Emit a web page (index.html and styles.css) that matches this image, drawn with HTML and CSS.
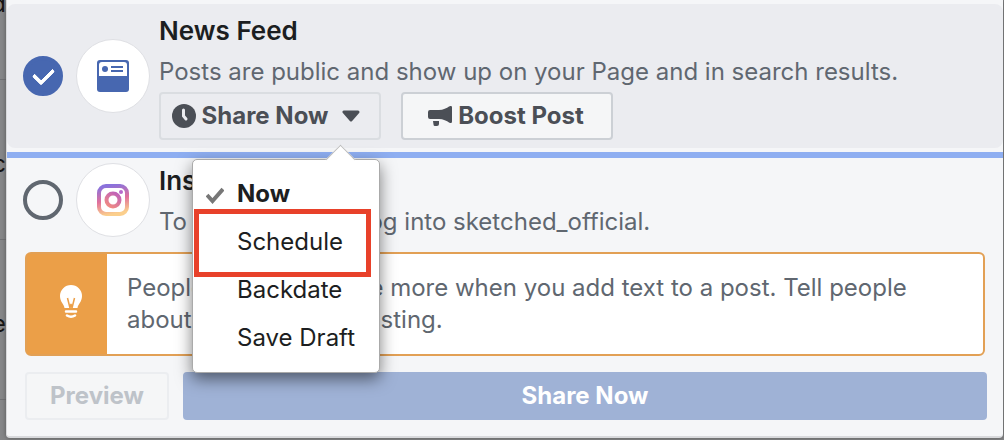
FILE: index.html
```html
<!DOCTYPE html>
<html lang="en">

<head>
    <meta charset="utf-8">
    <title>Share post</title>
    <link rel="stylesheet" href="styles.css">
</head>

<body>
    <div class="backdrop">
        <span class="backdrop-row">d</span>
        <span class="backdrop-row">c</span>
        <span class="backdrop-row">e</span>
    </div>

    <main class="dialog">
        <section class="channel selected">
            <input type="checkbox" class="tick" id="news-feed" checked>
            <div class="avatar">
                <svg width="32" height="32" viewBox="0 0 32 32">
                    <rect width="32" height="32" rx="3" fill="#4767b0" />
                    <path d="M2 5q0-3 3-3h22q3 0 3 3v11H2z" fill="#fff" />
                    <circle cx="8" cy="9" r="3" fill="#4767b0" />
                    <path d="M14 7h12M14 11h12" stroke="#4767b0" stroke-width="2" />
                </svg>
            </div>
            <div class="channel-info">
                <label class="channel-name" for="news-feed">News Feed</label>
                <p>Posts are public and show up on your Page and in search results.</p>
                <div class="actions">
                    <div class="dropdown">
                        <button type="button" class="button toggle">
                            <svg width="24" height="24" viewBox="0 0 24 24">
                                <circle cx="12" cy="12" r="12" fill="#4b4f56" />
                                <path d="M11.500 6v6l2.500 3" fill="none" stroke="#ebecf0" stroke-width="3" stroke-linecap="round" />
                            </svg>
                            <span>Share Now</span>
                            <svg class="caret" width="18" height="12" viewBox="0 0 18 12">
                                <path d="M2 2h14L9 10z" fill="#4b4f56" stroke="#4b4f56" stroke-width="3" stroke-linejoin="round" />
                            </svg>
                        </button>
                        <div class="menu">
                            <button type="button" class="menu-item active">
                                <svg class="menu-tick" width="18" height="18" viewBox="0 0 18 18">
                                    <path d="M1 9l5.500 6L17 3" fill="none" stroke="#777" stroke-width="4" />
                                </svg>
                                Now
                            </button>
                            <button type="button" class="menu-item marked">Schedule</button>
                            <button type="button" class="menu-item">Backdate</button>
                            <button type="button" class="menu-item">Save Draft</button>
                        </div>
                    </div>
                    <button type="button" class="button boost">
                        <svg width="24" height="20" viewBox="0 0 24 20">
                            <path d="M2 4h9c4 0 8-2 10-3.500q3-1.500 3 1v14q0 2.500-3 1C19 15 15 13 11 13H2q-2 0-2-2V6q0-2 2-2zM5 15h6v3q0 2-2 2H7q-1.500 0-1.500-1.500z" fill="#4b4f56" />
                        </svg>
                        <span>Boost Post</span>
                    </button>
                </div>
            </div>
        </section>

        <section class="channel">
            <input type="checkbox" class="tick" id="instagram">
            <div class="avatar">
                <svg width="32" height="32" viewBox="0 0 32 32">
                    <defs>
                        <linearGradient id="insta" x1="0.300" y1="0" x2="0.500" y2="1">
                            <stop offset="0" stop-color="#8a72dc" />
                            <stop offset="0.500" stop-color="#e0709c" />
                            <stop offset="1" stop-color="#fbcf8c" />
                        </linearGradient>
                        <linearGradient id="insta-lens" x1="0.800" y1="0" x2="0.200" y2="1">
                            <stop offset="0" stop-color="#c062b8" />
                            <stop offset="1" stop-color="#f08a84" />
                        </linearGradient>
                    </defs>
                    <rect x="2" y="2" width="28" height="28" rx="7" fill="none" stroke="url(#insta)" stroke-width="4" />
                    <circle cx="16" cy="16" r="6.500" fill="none" stroke="url(#insta-lens)" stroke-width="4" />
                    <circle cx="24" cy="8" r="2" fill="#b768cc" />
                </svg>
            </div>
            <div class="channel-info">
                <label class="channel-name" for="instagram">Instagram</label>
                <p>To share a photo, log into sketched_official.</p>
            </div>
        </section>

        <div class="tip">
            <div class="tip-icon">
                <svg width="24" height="34" viewBox="0 0 24 34">
                    <path d="M5.500 23C5 19 1 17 1 11a11 11 0 0 1 22 0c0 6-4 8-4.500 12z" fill="#fff" />
                    <path d="M8.500 13l2.500 10 1-4 1 4 2.500-10" fill="none" stroke="#eb9f48" stroke-width="1.500" />
                    <path d="M7 26.500h10M8 30.500q4 2.500 8 0" fill="none" stroke="#fff" stroke-width="2.500" stroke-linecap="round" />
                </svg>
            </div>
            <p>People usually engage more when you add text to a post. Tell people about what you are posting.</p>
        </div>

        <footer class="footer">
            <button type="button" class="button preview" disabled>Preview</button>
            <button type="button" class="button share" disabled>Share Now</button>
        </footer>
    </main>
</body>

</html>
```
FILE: styles.css
```css
* {
    box-sizing: border-box;
}

body {
    margin: 0;
    display: flex;
    min-height: 100vh;
    font-family: Inter, "Helvetica Neue", Arial, sans-serif;
    font-size: 24px;
    line-height: 32px;
    color: #606770;
    background-color: #858688;
}

p {
    margin: 0;
}

.backdrop {
    width: 6px;
    height: 100vh;
    overflow: hidden;
    display: flex;
    flex-direction: column;
    color: #111;
}

.backdrop-row {
    height: 160px;
    flex-shrink: 0;
    display: flex;
    justify-content: flex-end;
    padding-top: 68px;
    border-bottom: 1px solid #707174;
}

.backdrop-row:first-child {
    margin-top: -80px;
}

.dialog {
    flex: 1;
    align-self: flex-start;
    min-width: 0;
    margin-right: 1px;
    padding: 4px 0 16px;
    background-color: #f5f6f8;
    border-left: 1px solid #d8d9dc;
    border-bottom: 2px solid #d8d9dc;
    border-radius: 0 0 4px 4px;
    box-shadow: 0 0 4px #555;
}

.channel {
    display: flex;
    align-items: center;
    gap: 13px;
    padding: 0 16px;
}

.selected {
    height: 144px;
    margin-bottom: 4px;
    border-radius: 8px;
    background-color: #ebecf0;
}

.selected + .channel {
    height: 90px;
    margin-bottom: 10px;
    border-top: 6px solid #8eaef1;
}

.tick {
    appearance: none;
    flex: none;
    width: 40px;
    height: 40px;
    margin: 0;
    border: 4px solid #606770;
    border-radius: 50%;
    display: flex;
    align-items: center;
    justify-content: center;
}

.tick:checked {
    border-color: #4767b0;
    background-color: #4767b0;
}

.tick:checked::before {
    content: "";
    width: 9px;
    height: 16px;
    margin-bottom: 4px;
    border: solid #fff;
    border-width: 0 4px 4px 0;
    border-radius: 2px;
    transform: rotate(45deg);
}

.avatar {
    flex: none;
    width: 74px;
    height: 74px;
    border: 1px solid #dfe0e4;
    border-radius: 50%;
    background-color: #fff;
    display: flex;
    align-items: center;
    justify-content: center;
}

.channel-info {
    flex: 1;
    margin-left: -4px;
}

.channel-name {
    display: block;
    padding: 3px 0 9px;
    font-size: 26px;
    font-weight: 600;
    color: #1c1e21;
}

.actions {
    display: flex;
    gap: 20px;
    margin-top: 4px;
}

.button {
    display: flex;
    align-items: center;
    justify-content: center;
    gap: 6px;
    height: 48px;
    padding: 0;
    font: inherit;
    font-weight: 700;
    color: #4b4f56;
    background-color: #f5f6f7;
    border: 2px solid #ccd0d5;
    border-radius: 4px;
}

.toggle {
    width: 222px;
    padding-right: 8px;
    background-color: #ebecf0;
    border-color: #dadde1;
}

.caret {
    margin-left: 8px;
}

.boost {
    width: 212px;
    padding-right: 2px;
}

.dropdown {
    position: relative;
}

.menu {
    position: absolute;
    top: 67px;
    left: 33px;
    z-index: 1;
    width: 188px;
    padding: 10px 0;
    background-color: #fff;
    border: 1px solid #aaa;
    border-radius: 5px;
    box-shadow: 0 6px 16px rgba(0, 0, 0, 0.5);
}

.menu::before {
    content: "";
    position: absolute;
    top: -11px;
    right: 28px;
    width: 20px;
    height: 20px;
    background-color: #fff;
    border: solid #bbb;
    border-width: 1px 0 0 1px;
    transform: rotate(45deg);
}

.menu-item {
    position: relative;
    display: block;
    width: 100%;
    height: 48px;
    padding: 0 0 0 44px;
    border: 0;
    font: inherit;
    text-align: left;
    color: #1c1e21;
    background: none;
}

.active {
    font-weight: 700;
}

.menu-tick {
    position: absolute;
    top: 16px;
    left: 13px;
}

.marked::after {
    content: "";
    position: absolute;
    inset: -9px 8px -11px 1px;
    border: 5px solid #e8412a;
}

.tip {
    display: flex;
    margin: 0 18px 16px;
    background-color: #fff;
    border: 2px solid #e2a055;
    border-radius: 6px;
}

.tip-icon {
    flex: none;
    width: 80px;
    display: flex;
    align-items: center;
    justify-content: center;
    padding-left: 8px;
    padding-bottom: 4px;
    background-color: #eb9f48;
}

.tip p {
    padding: 18px 60px 18px 20px;
}

.footer {
    display: flex;
    gap: 14px;
    padding: 0 16px 0 18px;
}

.preview {
    width: 144px;
    color: #bec3c9;
    background-color: #f5f6f7;
    border-color: #ebedf0;
}

.share {
    flex: 1;
    color: #fff;
    background-color: #9fb2d6;
    border-color: #9fb2d6;
}
```
